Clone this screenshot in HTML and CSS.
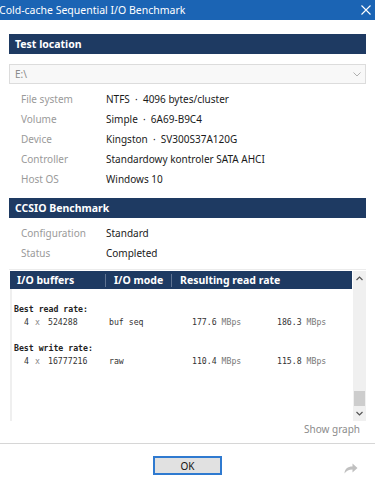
FILE: index.html
```html
<!DOCTYPE html>
<html lang="en">
  <head>
    <meta charset="UTF-8" />
    <meta name="viewport" content="width=device-width, initial-scale=1.0" />
    <title>Cold-cache Sequential I/O Benchmark</title>
    <link rel="stylesheet" href="styles.css">
  </head>
  <body>
    <div class="window">
      <div class="titlebar">
        <span class="title">Cold-cache Sequential I/O Benchmark</span>
        <svg class="close" width="10" height="10" viewBox="0 0 10 10">
          <path d="M0.5 0.5 L9.5 9.5 M9.5 0.5 L0.5 9.5" stroke="#fff" stroke-width="1.1" fill="none" />
        </svg>
      </div>

      <div class="content">
        <!-- Test location -->
        <div class="section-head">Test location</div>
        <div class="combo">
          <span>E:\</span>
          <svg width="8" height="5" viewBox="0 0 8 5">
            <path d="M0.5 0.5 L4 4 L7.5 0.5" stroke="#b0b0b0" stroke-width="1" fill="none" />
          </svg>
        </div>
        <div class="info">
          <div class="info-row"><span class="label">File system</span><span class="value">NTFS &nbsp;·&nbsp; 4096 bytes/cluster</span></div>
          <div class="info-row"><span class="label">Volume</span><span class="value">Simple &nbsp;·&nbsp; 6A69-B9C4</span></div>
          <div class="info-row"><span class="label">Device</span><span class="value">Kingston &nbsp;·&nbsp; SV300S37A120G</span></div>
          <div class="info-row"><span class="label">Controller</span><span class="value">Standardowy kontroler SATA AHCI</span></div>
          <div class="info-row"><span class="label">Host OS</span><span class="value">Windows 10</span></div>
        </div>

        <!-- Benchmark -->
        <div class="section-head bench">CCSIO Benchmark</div>
        <div class="info">
          <div class="info-row"><span class="label">Configuration</span><span class="value">Standard</span></div>
          <div class="info-row"><span class="label">Status</span><span class="value">Completed</span></div>
        </div>

        <!-- Results list -->
        <div class="results">
          <div class="results-main">
            <div class="results-head">
              <span class="col c1">I/O buffers</span>
              <span class="col c2">I/O mode</span>
              <span class="col c3">Resulting read rate</span>
            </div>
            <div class="results-body">
              <div class="mono-title">Best read rate:</div>
              <div class="mono-row">
                <span>4</span><span class="dim">x</span><span>524288</span><span>buf seq</span>
                <span>177.6 <i>MBps</i></span><span>186.3 <i>MBps</i></span>
              </div>
              <div class="mono-title gap">Best write rate:</div>
              <div class="mono-row">
                <span>4</span><span class="dim">x</span><span>16777216</span><span>raw</span>
                <span>110.4 <i>MBps</i></span><span>115.8 <i>MBps</i></span>
              </div>
            </div>
          </div>
          <div class="scrollbar">
            <svg class="arrow" width="7" height="5" viewBox="0 0 7 5">
              <path d="M0.5 4 L3.5 1 L6.5 4" stroke="#555" stroke-width="1.2" fill="none" />
            </svg>
            <div class="track"><div class="thumb"></div></div>
            <svg class="arrow" width="7" height="5" viewBox="0 0 7 5">
              <path d="M0.5 1 L3.5 4 L6.5 1" stroke="#555" stroke-width="1.2" fill="none" />
            </svg>
          </div>
        </div>
        <div class="graph-link">Show graph</div>
      </div>

      <div class="footer">
        <button class="ok">OK</button>
        <svg class="share" width="14" height="11" viewBox="0 0 14 11">
          <path d="M0.5 10.5 C0.8 6 3.5 3.6 8.5 3.6 V0.5 L13.5 5 L8.5 9.5 V6.6 C4.8 6.6 2.4 7.8 0.5 10.5 Z" fill="#c0c0c0" />
        </svg>
      </div>
    </div>
  </body>
</html>
```

FILE: styles.css
```css
body {
  margin: 0;
  background: #fff;
  font-family: "Noto Sans", "Open Sans", sans-serif;
  font-size: 10px;
  color: #222;
}

.window {
  width: 375px;
  height: 486px;
  overflow: hidden;
}

.titlebar {
  height: 20px;
  background: #1b64b4;
  color: #fff;
  display: flex;
  align-items: center;
  justify-content: space-between;
  padding: 0 4px 0 0;
  font-size: 10.5px;
}

.title {
  margin-left: -1px;
}

.content {
  padding: 0 9px;
}

.section-head {
  margin-top: 14px;
  height: 20px;
  line-height: 20px;
  background: #1e3a62;
  color: #fff;
  font-weight: bold;
  font-size: 10.5px;
  padding-left: 6px;
}

.section-head.bench {
  margin-top: 9px;
}

.combo {
  margin-top: 10px;
  height: 18px;
  border: 1px solid #dcdcdc;
  background: #f8f8f8;
  color: #8a8a8a;
  display: flex;
  align-items: center;
  justify-content: space-between;
  padding: 0 4px 0 5px;
}

.info {
  margin-top: 5px;
}

.info-row {
  display: flex;
  height: 20px;
  line-height: 20px;
  padding-left: 12px;
}

.label {
  width: 85px;
  color: #9a9a9a;
}

.value {
  color: #1a1a1a;
}

.results {
  margin-top: 6px;
  height: 150px;
  border-top: 1px solid #ececec;
  display: flex;
  padding-top: 1px;
}

.results-main {
  flex: 1;
  border-left: 2px solid #efefef;
  margin-left: 1px;
  position: relative;
}

.results-head {
  display: flex;
  height: 18px;
  align-items: center;
  background: #1e3a62;
  color: #fff;
  font-weight: bold;
  font-size: 10.5px;
  margin-left: -2px;
}

.col {
  padding-left: 7px;
  border-right: 1px solid #5f7392;
  line-height: 13px;
}

.col.c1 {
  width: 88px;
}

.col.c2 {
  width: 57px;
  padding-left: 8px;
}

.col.c3 {
  padding-left: 8px;
  border-right: none;
}

.results-body {
  padding: 14px 0 0 2px;
  font-family: "DejaVu Sans Mono", "Liberation Mono", monospace;
  font-size: 8.2px;
  line-height: 13px;
  color: #333;
}

.mono-title {
  font-weight: bold;
  color: #222;
}

.mono-title.gap {
  margin-top: 13px;
}

.mono-row {
  display: grid;
  grid-template-columns: 11px 13px 61px 83px 85px auto;
  padding-left: 10px;
}

.mono-row i {
  font-style: normal;
  color: #777;
}

.dim {
  color: #888;
}

.scrollbar {
  width: 13px;
  margin-left: 1px;
  background: #f0f0f0;
  display: flex;
  flex-direction: column;
  align-items: center;
}

.arrow {
  margin: 5px 0;
}

.track {
  flex: 1;
  width: 11px;
  display: flex;
  flex-direction: column;
  justify-content: flex-end;
}

.thumb {
  height: 15px;
  background: #cdcdcd;
}

.graph-link {
  text-align: right;
  color: #8c8c8c;
  padding-right: 6px;
  line-height: 15px;
  margin-top: 1px;
}

.footer {
  margin-top: 6px;
  border-top: 1px solid #d6d6d6;
  height: 43px;
  display: flex;
  align-items: center;
  justify-content: center;
  position: relative;
}

.ok {
  width: 69px;
  height: 19px;
  margin-top: 0;
  border: 1px solid #2f7ad0;
  box-shadow: inset 0 0 0 1px #2f7ad0;
  background: #e1e1e1;
  font-family: inherit;
  font-size: 10px;
  color: #111;
  padding: 0;
}

.share {
  position: absolute;
  right: 17px;
  top: 19px;
}
```
